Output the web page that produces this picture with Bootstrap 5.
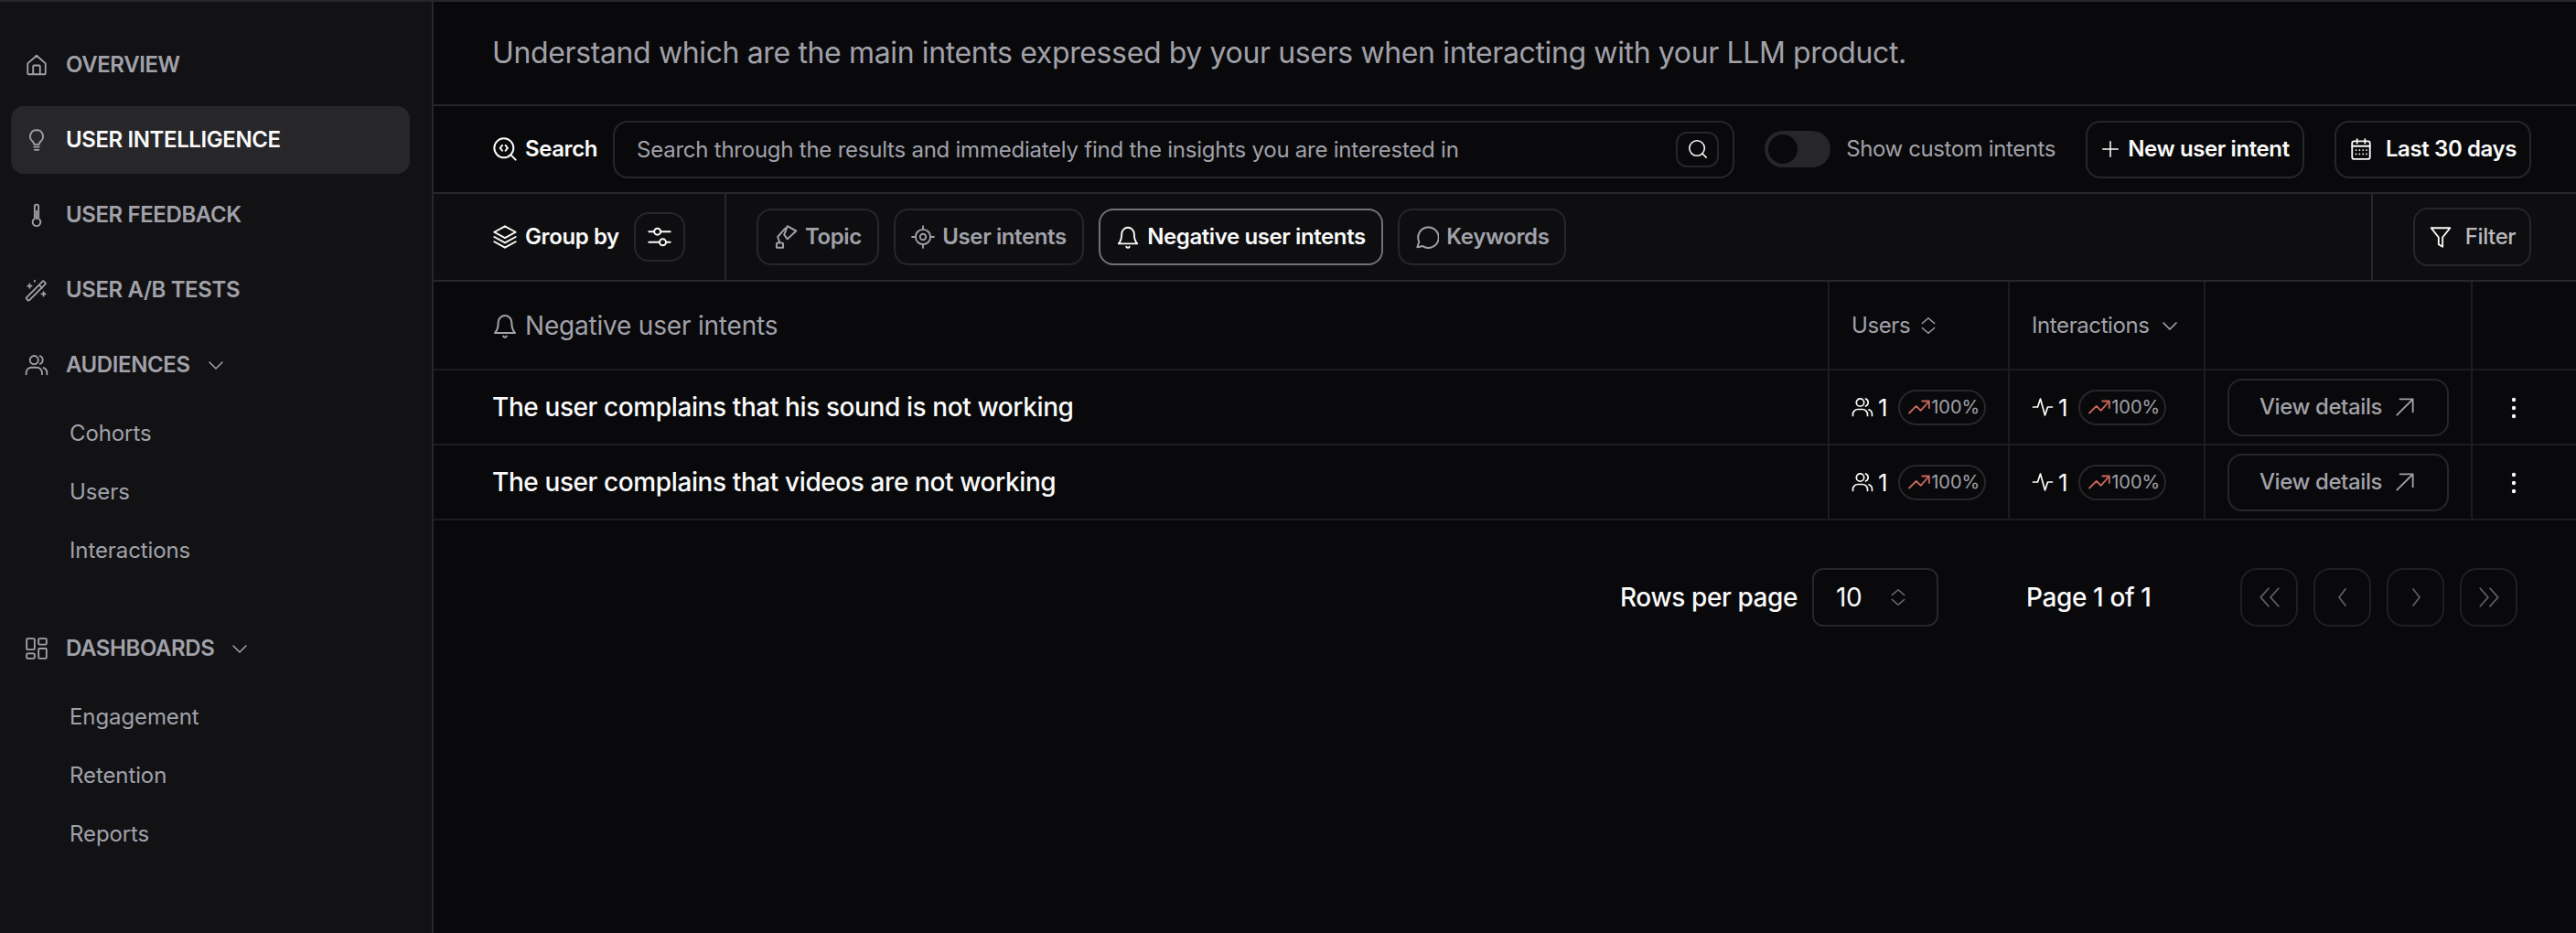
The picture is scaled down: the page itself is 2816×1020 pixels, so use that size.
<!DOCTYPE html>
<html lang="en"><head><meta charset="utf-8"><title>User Intelligence</title>
<link href="https://cdn.jsdelivr.net/npm/bootstrap@5.3.0/dist/css/bootstrap.min.css" rel="stylesheet">
<style>
html,body{height:100%}
body{margin:0;background:#09090b;color:#fafafa;font-family:Inter,"Liberation Sans",sans-serif;font-size:24px;letter-spacing:-.4px;overflow:hidden}
svg.ic{fill:none;stroke:currentColor;stroke-width:1.7;stroke-linecap:round;stroke-linejoin:round;flex:none}
.shell{height:1020px;border-top:2px solid #27272a}
.side{width:474px;flex:none;background:#121214;border-right:2px solid #27272a;padding:32px 24px 0 12px}
.nv{display:flex;align-items:center;height:74px;margin-bottom:8px;padding-left:15px;border-radius:14px;color:#a1a1aa;font-weight:600;font-size:24px;text-decoration:none;gap:19px}
.nv.on{background:#27272a;color:#fafafa}
.nv.on svg{color:#a1a1aa}
.nv .ch{margin-left:-3px;stroke-width:1.5}
.sb{display:flex;align-items:center;height:64px;padding-left:64px;color:#a1a1aa;font-size:24px;text-decoration:none;letter-spacing:-.1px}
.subs{margin-top:-2px}
.subs.a{margin-bottom:38px}
.mainp{min-width:0}
.intro{height:114px;display:flex;align-items:center;padding:0 64px;font-size:32px;color:#a1a1aa;border-bottom:2px solid #27272a;letter-spacing:-.37px}
.srow{height:96px;display:flex;align-items:center;padding:0 49px 0 64px;gap:33px;border-bottom:2px solid #27272a}
.lbl{display:flex;align-items:center;gap:8px;font-weight:600;white-space:nowrap}
.sbox{position:relative;flex:1;margin-left:-16px}
.sbox .form-control{height:63px;background:transparent;border:2px solid #27272a;border-radius:16px;padding:0 70px 0 24px;color:#fafafa;font-size:24px;letter-spacing:-.24px}
.sbox .form-control::placeholder{color:#a1a1aa;opacity:1}
.sgo{position:absolute;right:17px;top:12px;width:47px;height:39px;border:2px solid #27272a;border-radius:12px;display:flex;align-items:center;justify-content:center;color:#fafafa}
.tgl{display:flex;align-items:center;gap:17px;color:#a1a1aa;white-space:nowrap}
.trk{width:72px;height:40px;border-radius:20px;background:#27272a;display:block;padding:4px}
.trk i{display:block;width:32px;height:32px;border-radius:50%;background:#09090b}
.bt.btn{--bs-btn-color:#fafafa;--bs-btn-border-color:#27272a;--bs-btn-border-width:2px;--bs-btn-hover-color:#fafafa;--bs-btn-hover-border-color:#3f3f46;--bs-btn-bg:transparent;--bs-btn-hover-bg:transparent;display:inline-flex;align-items:center;justify-content:center;height:63px;border-radius:16px;font-size:24px;font-weight:600;letter-spacing:-.4px;white-space:nowrap}
.wnew{width:239px;gap:8px}.wcal{width:215px;gap:14px}
.grow{height:96px;display:flex;background:#0e0e10;border-bottom:2px solid #27272a}
.gl{width:320px;flex:none;padding-left:64px;display:flex;align-items:center;gap:16px;border-right:2px solid #27272a}
.gb{width:56px;height:54px;border:2px solid #27272a;border-radius:16px;display:flex;align-items:center;justify-content:center}
.gm{flex:1;display:flex;align-items:center;gap:16.5px;padding-left:33px}
.gr{width:224px;flex:none;display:flex;align-items:center;justify-content:flex-end;padding-right:49px;border-left:2px solid #27272a}
.tb{display:flex;align-items:center;gap:8px;height:62px;padding:0 17px;border:2px solid #27272a;border-radius:16px;color:#a1a1aa;font-weight:600;white-space:nowrap}
.tb.on{border-color:#71717a;color:#fafafa}
.fl.btn{--bs-btn-color:#b8b8bf;--bs-btn-hover-color:#b8b8bf;font-weight:500;width:129px;height:64px;padding:0;gap:14px}
.fl svg{color:#fafafa}
.tbl{width:100%;table-layout:fixed;margin:0;--bs-table-bg:transparent;--bs-table-color:#fafafa;--bs-table-border-color:#1c1c1f;border-color:#1c1c1f}
.tbl th,.tbl td{padding:0 0 0 24px;vertical-align:middle;border-bottom:2px solid #1c1c1f;border-right:2px solid #1c1c1f}
.tbl th:last-child,.tbl td:last-child{border-right:0}
.tbl thead tr{height:96px}.tbl tbody tr{height:82px}
.tbl th{font-weight:400;color:#a1a1aa;font-size:24px}
.tbl th:first-child,.tbl td:first-child{padding-left:64px}
.tbl th:first-child{font-size:28px;letter-spacing:-.2px}
.tbl td:first-child{font-size:28px;font-weight:500}
.c2{width:197px}.c3{width:214px}.c4{width:292px}.c5{width:114px}
.thi{display:flex;align-items:center;gap:10px}
.thb{gap:8px}
.cel{display:flex;align-items:center;gap:5px;white-space:nowrap;font-size:26px}
.pct{display:inline-flex;align-items:center;height:39px;width:96px;padding:0 0 0 8px;margin-left:7px;border:2px solid #27272a;border-radius:20px;color:#a1a1aa;font-size:20px;letter-spacing:0}
.pct svg{color:#c9665a}
.tbl td .vd.btn{--bs-btn-color:#a1a1aa;--bs-btn-hover-color:#a1a1aa;font-weight:500;width:242px;gap:12px}
.tbl td.dots{padding:0 0 0 42px}
.pg{display:flex;align-items:center;padding:52px 0 0 1297px;font-size:28px;font-weight:500}
.slc{width:138px;height:64px;margin-left:16px;border:2px solid #27272a;border-radius:12px;display:flex;align-items:center;justify-content:space-between;padding:0 32px 0 24px;font-weight:400}
.slc svg{color:#71717a}
.pgt{margin-left:96px;width:234px}
.pb{width:63px;height:64px;border:2px solid #1f1f22;border-radius:18px;margin-right:17px;display:flex;align-items:center;justify-content:center;color:#5f5f66}
</style></head>
<body>
<svg width="0" height="0" class="position-absolute">
<symbol id="i-home" viewBox="0 0 24 24"><path d="M3 10.500 12 2.500l9 8V20a1.500 1.500 0 0 1-1.500 1.500H4.500A1.500 1.500 0 0 1 3 20zM8.500 21.500v-8a1 1 0 0 1 1-1h5a1 1 0 0 1 1 1v8"/></symbol>
<symbol id="i-bulb" viewBox="0 0 24 24"><path d="M12 2a6.500 6.500 0 0 0-4 11.600c.9.800 1.500 1.700 1.500 2.900h5c0-1.200.6-2.100 1.500-2.900A6.500 6.500 0 0 0 12 2zM9.500 19h5M10 22h4"/></symbol>
<symbol id="i-therm" viewBox="0 0 24 24"><path d="M10 3.500a2 2 0 0 1 4 0v12.200a4 4 0 1 1-4 0zM12 8v8"/></symbol>
<symbol id="i-wand" viewBox="0 0 24 24"><path d="m2 19.500 15.800-16a1.300 1.300 0 0 1 1.800 0l1 1a1.300 1.300 0 0 1 0 1.800L4.800 22.200a1.300 1.300 0 0 1-1.800 0l-1-1a1.300 1.300 0 0 1 0-1.700zM14.500 7l3 3M5 6v4M3 8h4M19 14v4M17 16h4M10 2.500v1"/></symbol>
<symbol id="i-users" viewBox="0 0 24 24"><circle cx="9.500" cy="7" r="4.200"/><path d="M1.500 21.500v-1.500a5.500 5.500 0 0 1 5.500-5.500h5a5.500 5.500 0 0 1 5.500 5.500v1.500M15.500 3a4.300 4.300 0 0 1 0 8M19 14.800a5.500 5.500 0 0 1 3.500 5.200v1.500"/></symbol>
<symbol id="i-dash" viewBox="0 0 24 24"><rect x="2" y="2" width="8" height="11" rx="1"/><rect x="14" y="2" width="8" height="6" rx="1"/><rect x="14" y="12" width="8" height="10" rx="1"/><rect x="2" y="17" width="8" height="5" rx="1"/></symbol>
<symbol id="i-down" viewBox="0 0 24 24"><path d="m5 9 7 7 7-7"/></symbol>
<symbol id="i-updown" viewBox="0 0 24 24"><path d="m4 9 8-7 8 7M4 15l8 7 8-7"/></symbol>
<symbol id="i-scode" viewBox="0 0 24 24"><circle cx="11" cy="11" r="9"/><path d="m22 22-4.500-4.500M9.500 8.500 7.500 11l2 2.500M12.500 8.500l2 2.500-2 2.500"/></symbol>
<symbol id="i-search" viewBox="0 0 24 24"><circle cx="11" cy="11" r="9"/><path d="m22 22-4.500-4.500"/></symbol>
<symbol id="i-layers" viewBox="0 0 24 24"><path d="M12 2 2 7.500 12 13l10-5.500zM2 12l10 5.500L22 12M2 16.500 12 22l10-5.500"/></symbol>
<symbol id="i-sliders" viewBox="0 0 24 24"><circle cx="10" cy="7" r="3"/><circle cx="15" cy="17" r="3"/><path d="M2 7h5M13 7h9M2 17h10M18 17h4"/></symbol>
<symbol id="i-lamp" viewBox="2 1 21 22"><path d="M4 22v-3.500a1 1 0 0 1 1-1h4a1 1 0 0 1 1 1V22zM7 17.500 5 12l7-8M14 2l8 4.500-8 7.500-3-4z"/></symbol>
<symbol id="i-target" viewBox="0 0 24 24"><circle cx="12" cy="12" r="7.500"/><circle cx="12" cy="12" r="3"/><path d="M12 1v3.500M12 19.500V23M1 12h3.500M19.500 12H23"/></symbol>
<symbol id="i-bell" viewBox="1.500 .5 21 23"><path d="M6 9a6 6 0 0 1 12 0c0 5 1 7.500 3 9.500H3c2-2 3-4.500 3-9.500zM10.500 21.500a1.700 1.700 0 0 0 3 0"/></symbol>
<symbol id="i-msg" viewBox="1.500 1 21 22"><path d="M3 21.500l1.600-5A9.500 9.500 0 1 1 8 20.500z"/></symbol>
<symbol id="i-plus" viewBox="0 0 24 24"><path d="M12 3v18M3 12h18"/></symbol>
<symbol id="i-cal" viewBox="0 0 24 24"><rect x="3" y="4" width="18" height="18" rx="2"/><path d="M3 9h18M8 2v4M16 2v4M7 13h.01M10.500 13h.01M14 13h.01M17.500 13h.01M7 17h.01M10.500 17h.01M14 17h.01M17.500 17h.01"/></symbol>
<symbol id="i-filter" viewBox="0 0 24 24"><path d="M2.500 3h19l-7.500 9.500V22l-4-2.500v-7z"/></symbol>
<symbol id="i-arrow" viewBox="0 0 24 24"><path d="M4 20 20 4M7 4h13v13"/></symbol>
<symbol id="i-trend" viewBox="0 0 24 24"><path d="m2 18 7-7 4.500 4.500L22 6M15 6h7v7"/></symbol>
<symbol id="i-act" viewBox="0 0 24 24"><path d="M1.500 12h5l3-9 5 18 3-9h5"/></symbol>
<symbol id="i-left" viewBox="0 0 24 24"><path d="m15 3-7 9 7 9"/></symbol>
<symbol id="i-right" viewBox="0 0 24 24"><path d="m9 3 7 9-7 9"/></symbol>
<symbol id="i-dleft" viewBox="0 0 24 24"><path d="M11 3 3 12l8 9M21 3l-8 9 8 9"/></symbol>
<symbol id="i-dright" viewBox="0 0 24 24"><path d="m3 3 8 9-8 9M13 3l8 9-8 9"/></symbol>
</svg>

<div class="shell d-flex">
<nav class="side">
<a class="nv" href="#"><svg class="ic" width="26" height="26"><use href="#i-home"/></svg>OVERVIEW</a>
<a class="nv on" href="#"><svg class="ic" width="26" height="26"><use href="#i-bulb"/></svg>USER INTELLIGENCE</a>
<a class="nv" href="#"><svg class="ic" width="26" height="26"><use href="#i-therm"/></svg>USER FEEDBACK</a>
<a class="nv" href="#"><svg class="ic" width="26" height="26"><use href="#i-wand"/></svg>USER A/B TESTS</a>
<a class="nv" href="#"><svg class="ic" width="26" height="26"><use href="#i-users"/></svg>AUDIENCES<svg class="ic ch" width="24" height="24"><use href="#i-down"/></svg></a>
<div class="subs a"><a class="sb" href="#">Cohorts</a><a class="sb" href="#">Users</a><a class="sb" href="#">Interactions</a></div>
<a class="nv" href="#"><svg class="ic" width="26" height="26"><use href="#i-dash"/></svg>DASHBOARDS<svg class="ic ch" width="24" height="24"><use href="#i-down"/></svg></a>
<div class="subs"><a class="sb" href="#">Engagement</a><a class="sb" href="#">Retention</a><a class="sb" href="#">Reports</a></div>
</nav>
<main class="mainp flex-grow-1">
<div class="intro">Understand which are the main intents expressed by your users when interacting with your LLM product.</div>
<div class="srow">
<div class="lbl"><svg class="ic" width="28" height="28"><use href="#i-scode"/></svg>Search</div>
<div class="sbox"><input class="form-control" type="text" placeholder="Search through the results and immediately find the insights you are interested in"><span class="sgo"><svg class="ic" width="22" height="22"><use href="#i-search"/></svg></span></div>
<div class="tgl"><span class="trk"><i></i></span>Show custom intents</div>
<button class="btn bt wnew" type="button"><svg class="ic" width="22" height="22"><use href="#i-plus"/></svg>New user intent</button>
<button class="btn bt wcal" type="button"><svg class="ic" width="26" height="26"><use href="#i-cal"/></svg>Last 30 days</button>
</div>
<div class="grow">
<div class="gl"><div class="lbl"><svg class="ic" width="28" height="28"><use href="#i-layers"/></svg>Group by</div><span class="gb"><svg class="ic" width="28" height="28"><use href="#i-sliders"/></svg></span></div>
<div class="gm">
<span class="tb"><svg class="ic" width="26" height="26"><use href="#i-lamp"/></svg>Topic</span>
<span class="tb"><svg class="ic" width="26" height="26"><use href="#i-target"/></svg>User intents</span>
<span class="tb on"><svg class="ic" width="26" height="26"><use href="#i-bell"/></svg>Negative user intents</span>
<span class="tb"><svg class="ic" width="26" height="26"><use href="#i-msg"/></svg>Keywords</span>
</div>
<div class="gr"><button class="btn bt fl" type="button"><svg class="ic" width="26" height="26"><use href="#i-filter"/></svg>Filter</button></div>
</div>
<table class="table tbl">
<colgroup><col><col class="c2"><col class="c3"><col class="c4"><col class="c5"></colgroup>
<thead><tr><th><span class="thi thb"><svg class="ic" width="28" height="28"><use href="#i-bell"/></svg>Negative user intents</span></th><th><span class="thi">Users <svg class="ic" width="20" height="20"><use href="#i-updown"/></svg></span></th><th><span class="thi">Interactions <svg class="ic" width="24" height="24"><use href="#i-down"/></svg></span></th><th></th><th></th></tr></thead>
<tbody>
<tr><td>The user complains that his sound is not working</td><td><span class="cel"><svg class="ic" width="24" height="24"><use href="#i-users"/></svg>1<span class="pct"><svg class="ic" width="26" height="26"><use href="#i-trend"/></svg>100%</span></span></td><td><span class="cel"><svg class="ic" width="24" height="24"><use href="#i-act"/></svg>1<span class="pct"><svg class="ic" width="26" height="26"><use href="#i-trend"/></svg>100%</span></span></td><td><button class="btn bt vd" type="button">View details<svg class="ic" width="26" height="26"><use href="#i-arrow"/></svg></button></td><td class="dots"><svg width="6" height="24" fill="#fafafa"><circle cx="3" cy="3" r="2.200"/><circle cx="3" cy="12" r="2.200"/><circle cx="3" cy="21" r="2.200"/></svg></td></tr>
<tr><td>The user complains that videos are not working</td><td><span class="cel"><svg class="ic" width="24" height="24"><use href="#i-users"/></svg>1<span class="pct"><svg class="ic" width="26" height="26"><use href="#i-trend"/></svg>100%</span></span></td><td><span class="cel"><svg class="ic" width="24" height="24"><use href="#i-act"/></svg>1<span class="pct"><svg class="ic" width="26" height="26"><use href="#i-trend"/></svg>100%</span></span></td><td><button class="btn bt vd" type="button">View details<svg class="ic" width="26" height="26"><use href="#i-arrow"/></svg></button></td><td class="dots"><svg width="6" height="24" fill="#fafafa"><circle cx="3" cy="3" r="2.200"/><circle cx="3" cy="12" r="2.200"/><circle cx="3" cy="21" r="2.200"/></svg></td></tr>
</tbody></table>
<div class="pg"><span>Rows per page</span><span class="slc">10<svg class="ic" width="20" height="20"><use href="#i-updown"/></svg></span><span class="pgt">Page 1 of 1</span>
<span class="pb"><svg class="ic" width="26" height="26"><use href="#i-dleft"/></svg></span><span class="pb"><svg class="ic" width="24" height="24"><use href="#i-left"/></svg></span><span class="pb"><svg class="ic" width="24" height="24"><use href="#i-right"/></svg></span><span class="pb"><svg class="ic" width="26" height="26"><use href="#i-dright"/></svg></span></div>
</main>
</div>
<script src="https://cdn.jsdelivr.net/npm/bootstrap@5.3.0/dist/js/bootstrap.bundle.min.js"></script>
</body></html>
